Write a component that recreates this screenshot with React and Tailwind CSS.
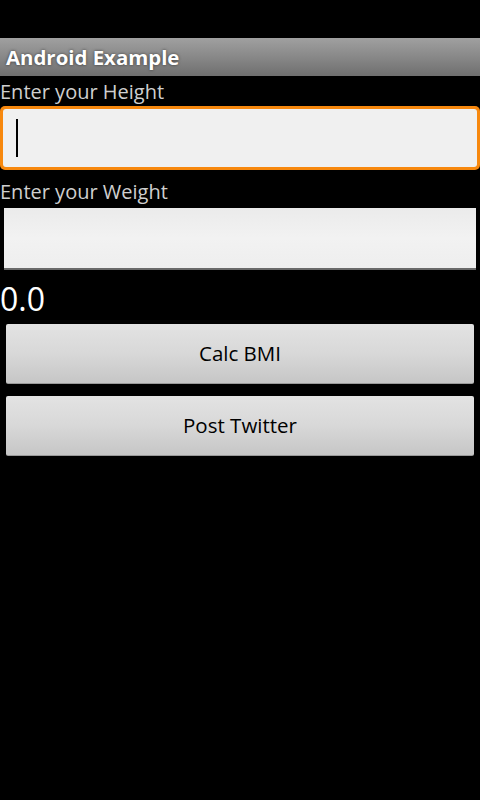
export default function App() {
  return (
    <div
      className="w-[480px] h-[800px] bg-black overflow-hidden"
      style={{ fontFamily: '"Open Sans", "DejaVu Sans", sans-serif' }}
    >
      {/* status bar area */}
      <div className="h-[38px] bg-black" />

      {/* title bar */}
      <div className="h-[38px] flex items-center px-[6px] bg-gradient-to-b from-[#a0a0a0] via-[#888888] to-[#6f6f6f]">
        <span className="text-white font-bold text-[20.4px] leading-none [text-shadow:0_0_3px_rgba(0,0,0,0.6)]">
          Android Example
        </span>
      </div>

      <div className="flex flex-col">
        <div className="h-[30px] flex items-end text-[#cfcfcf] text-[20px] leading-[28px]">
          Enter your Height
        </div>

        {/* focused input */}
        <div className="h-[64px] rounded-[5px] bg-[#f7880e] p-[3px]">
          <div className="h-full rounded-[3px] bg-[#f0f0f0] flex items-center pl-[13px]">
            <div className="w-[1.5px] h-[38px] bg-black" />
          </div>
        </div>

        <div className="h-[36px] flex items-end text-[#cfcfcf] text-[20px] leading-[28px]">
          Enter your Weight
        </div>

        {/* normal input */}
        <div className="mt-[2px] mx-[4px] h-[62px] bg-gradient-to-b from-[#ebebeb] via-[#f2f2f2] to-[#eeeeee] border-b-[2px] border-[#6a6a6a]" />

        <div className="h-[48px] flex items-end text-white text-[32px] leading-[38px]">
          0.0
        </div>

        <div className="px-[6px] pt-[6px] flex flex-col gap-[12px]">
          <button className="h-[60px] w-full bg-gradient-to-b from-[#e3e3e3] via-[#d8d8d8] to-[#c6c6c6] text-black text-[20.5px] border-b border-[#9a9a9a] rounded-[2px]">
            Calc BMI
          </button>
          <button className="h-[60px] w-full bg-gradient-to-b from-[#e3e3e3] via-[#d8d8d8] to-[#c6c6c6] text-black text-[20.5px] border-b border-[#9a9a9a] rounded-[2px]">
            Post Twitter
          </button>
        </div>
      </div>
    </div>
  );
}
